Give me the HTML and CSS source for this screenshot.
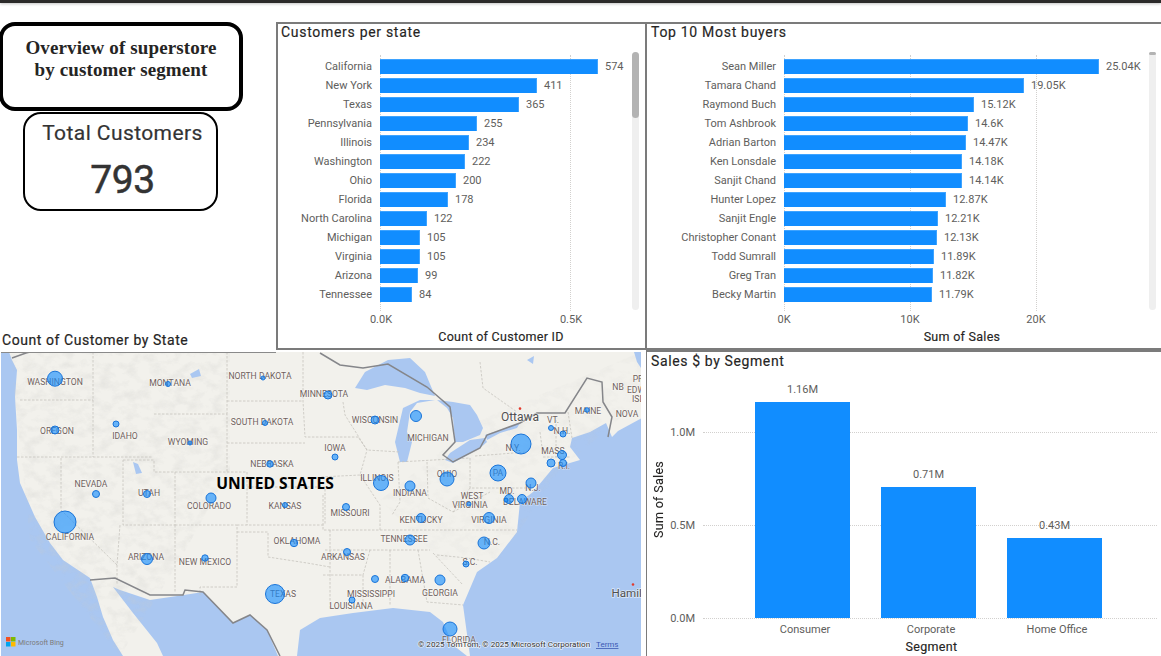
FILE: index.html
```html
<!DOCTYPE html>
<html lang="en">
<head>
<meta charset="utf-8">
<title>Overview of superstore by customer segment</title>
<link rel="stylesheet" href="styles.css">
</head>
<body>
<div class="board">
  <div class="topbar"></div>
  <div class="side">
    <h1 class="headline">Overview of superstore<br>by customer segment</h1>
    <div class="kpi">
      <div class="kpi-label">Total Customers</div>
      <div class="kpi-value">793</div>
    </div>
    <h2 class="map-title">Count of Customer by State</h2>
  </div>

  <section class="panel hchart states">
    <h2 class="title">Customers per state</h2>
    <div class="plot">
      <div class="grid"><i></i><i></i></div>
      <div class="row"><span class="lab">California</span><b style="width:218px"></b><span class="val">574</span></div>
      <div class="row"><span class="lab">New York</span><b style="width:157px"></b><span class="val">411</span></div>
      <div class="row"><span class="lab">Texas</span><b style="width:139px"></b><span class="val">365</span></div>
      <div class="row"><span class="lab">Pennsylvania</span><b style="width:97px"></b><span class="val">255</span></div>
      <div class="row"><span class="lab">Illinois</span><b style="width:89px"></b><span class="val">234</span></div>
      <div class="row"><span class="lab">Washington</span><b style="width:85px"></b><span class="val">222</span></div>
      <div class="row"><span class="lab">Ohio</span><b style="width:76px"></b><span class="val">200</span></div>
      <div class="row"><span class="lab">Florida</span><b style="width:68px"></b><span class="val">178</span></div>
      <div class="row"><span class="lab">North Carolina</span><b style="width:47px"></b><span class="val">122</span></div>
      <div class="row"><span class="lab">Michigan</span><b style="width:40px"></b><span class="val">105</span></div>
      <div class="row"><span class="lab">Virginia</span><b style="width:40px"></b><span class="val">105</span></div>
      <div class="row"><span class="lab">Arizona</span><b style="width:38px"></b><span class="val">99</span></div>
      <div class="row"><span class="lab">Tennessee</span><b style="width:32px"></b><span class="val">84</span></div>
    </div>
    <div class="ticks"><span>0.0K</span><span>0.5K</span></div>
    <div class="axis-title">Count of Customer ID</div>
    <div class="scroll"><div class="thumb"></div></div>
  </section>

  <section class="panel hchart buyers">
    <h2 class="title">Top 10 Most buyers</h2>
    <div class="plot">
      <div class="grid"><i></i><i></i><i></i></div>
      <div class="row"><span class="lab">Sean Miller</span><b style="width:315px"></b><span class="val">25.04K</span></div>
      <div class="row"><span class="lab">Tamara Chand</span><b style="width:240px"></b><span class="val">19.05K</span></div>
      <div class="row"><span class="lab">Raymond Buch</span><b style="width:190px"></b><span class="val">15.12K</span></div>
      <div class="row"><span class="lab">Tom Ashbrook</span><b style="width:184px"></b><span class="val">14.6K</span></div>
      <div class="row"><span class="lab">Adrian Barton</span><b style="width:182px"></b><span class="val">14.47K</span></div>
      <div class="row"><span class="lab">Ken Lonsdale</span><b style="width:178px"></b><span class="val">14.18K</span></div>
      <div class="row"><span class="lab">Sanjit Chand</span><b style="width:178px"></b><span class="val">14.14K</span></div>
      <div class="row"><span class="lab">Hunter Lopez</span><b style="width:162px"></b><span class="val">12.87K</span></div>
      <div class="row"><span class="lab">Sanjit Engle</span><b style="width:154px"></b><span class="val">12.21K</span></div>
      <div class="row"><span class="lab">Christopher Conant</span><b style="width:153px"></b><span class="val">12.13K</span></div>
      <div class="row"><span class="lab">Todd Sumrall</span><b style="width:150px"></b><span class="val">11.89K</span></div>
      <div class="row"><span class="lab">Greg Tran</span><b style="width:149px"></b><span class="val">11.82K</span></div>
      <div class="row"><span class="lab">Becky Martin</span><b style="width:148px"></b><span class="val">11.79K</span></div>
    </div>
    <div class="ticks"><span>0K</span><span>10K</span><span>20K</span></div>
    <div class="axis-title">Sum of Sales</div>
    <div class="scroll"><div class="thumb"></div></div>
  </section>

  <div class="map">
    <svg class="map-svg" viewBox="1 352 640 304" width="640" height="304" role="img" aria-label="Bubble map of customers by US state">
      <defs>
        <filter id="relief" x="0" y="0" width="100%" height="100%">
          <feTurbulence type="fractalNoise" baseFrequency="0.08 0.11" numOctaves="4" seed="7"/>
          <feColorMatrix type="matrix" values="0 0 0 0 .6  0 0 0 0 .6  0 0 0 0 .58  1.6 0 0 0 -.68"/>
        </filter>
        <clipPath id="west"><polygon points="10,352 230,352 230,470 180,560 120,656 30,540 15,400"/></clipPath>
        <clipPath id="east"><polygon points="380,500 480,420 641,352 641,400 560,470 500,560 440,560"/></clipPath>
      </defs>
      <rect class="sea" x="0" y="350" width="642" height="308"/>
      <path class="land" d="M9,352 L12,360 L17,370 L15,397 L17,430 L17,460 L20,483 L35,517 L50,543 L63,560 L90,578 L97,597 L103,617 L113,640 L123,656 L163,656 L157,643 L133,613 L113,587 L120,590 L150,600 L184,595 L203,592 L233,623 L250,615 L267,630 L278,656 L297,656 L300,630 L320,618 L353,613 L393,608 L430,612 L443,622 L453,645 L467,656 L470,656 L463,605 L477,572 L497,558 L517,532 L520,502 L533,492 L553,468 L580,460 L570,447 L572,438 L590,432 L606,423 L612,437 L618,431 L642,418 L642,352 Z"/>
      <rect class="relief" x="0" y="350" width="642" height="308" filter="url(#relief)" clip-path="url(#west)"/>
      <rect class="relief light" x="0" y="350" width="642" height="308" filter="url(#relief)" clip-path="url(#east)"/>
      <g class="water">
        <polygon points="355,388 365,372 388,360 410,358 425,372 435,396 420,393 405,388 385,385 367,390"/>
        <polygon points="400,462 395,442 403,408 420,400 435,400 417,403 410,412 407,432 412,442 407,462"/>
        <polygon points="437,400 453,402 470,405 477,415 483,428 480,435 463,442 455,442 453,418 447,408"/>
        <polygon points="445,460 453,463 480,448 487,442 485,438 470,440 450,453"/>
        <polygon points="485,435 500,430 520,423 517,428 500,433 487,440"/>
        <polygon points="133,462 138,464 142,473 136,474"/>
        <polygon points="190,374 199,369 201,376 192,378"/>
        <polygon points="527,360 534,356 533,364"/>
        <polygon points="634,352 641,352 641,368 637,362"/>
      </g>
      <g class="states-lines">
        <polyline points="17,457 153,457"/><polyline points="20,400 93,400"/><polyline points="93,352 93,457"/>
        <polyline points="61,458 61,510 117,565 120,525"/><polyline points="123,460 154,460 154,472 175,472 175,525 123,525 123,460"/>
        <polyline points="117,565 117,585"/><polyline points="175,525 175,593"/><polyline points="175,525 237,525 237,587 200,587 200,595"/>
        <polyline points="175,472 247,472 247,525"/><polyline points="154,414 227,414 227,472"/><polyline points="227,352 227,414"/>
        <polyline points="227,401 303,401"/><polyline points="227,443 305,443"/><polyline points="247,487 325,487 325,525"/><polyline points="237,525 325,525"/>
        <polyline points="237,532 268,532 268,557 307,563 330,567"/><polyline points="303,352 303,401 305,437 320,437 358,437 367,450 360,475 320,477"/>
        <polyline points="323,495 323,530 380,530 380,505 360,475"/><polyline points="343,402 345,415 367,450 400,452"/>
        <polyline points="398,462 400,502 392,515"/><polyline points="398,462 470,458"/><polyline points="427,462 428,498"/><polyline points="470,458 470,488 527,488"/>
        <polyline points="380,530 517,530"/><polyline points="325,550 430,550"/><polyline points="390,550 390,605"/><polyline points="418,550 427,602 463,605"/>
        <polyline points="323,575 363,575 363,605"/><polyline points="370,550 363,575"/><polyline points="330,530 330,610"/><polyline points="437,555 467,558 490,562"/>
        <polyline points="433,553 463,585"/><polyline points="453,512 490,492"/><polyline points="428,498 453,512 470,488"/>
        <polyline points="475,456 527,452"/><polyline points="540,432 543,455"/><polyline points="543,457 570,457"/><polyline points="568,412 572,438"/>
        <polyline points="480,362 483,388 517,412"/><polyline points="556,420 556,457"/>
      </g>
      <g class="border">
        <polyline points="12,358 26,353 30,352"/>
        <polyline points="320,353 340,365 363,368 388,364 427,387 450,407 455,442 443,455 453,462 480,448 487,435 520,423 537,413 565,413 587,378 602,382 603,402 612,417 608,437"/>
        <polyline points="90,580 115,578 150,595 183,595 185,590 203,592 233,623 250,615 267,630 280,656"/>
      </g>
      <line class="edge" x1="0" y1="352.5" x2="276" y2="352.5"/>
      <g class="place">
        <text x="55" y="385">WASHINGTON</text><text x="170" y="386">MONTANA</text><text x="260" y="379">NORTH DAKOTA</text>
        <text x="324" y="397">MINNESOTA</text><text x="57" y="434">OREGON</text><text x="125" y="439">IDAHO</text>
        <text x="262" y="425">SOUTH DAKOTA</text><text x="188" y="445">WYOMING</text><text x="335" y="451">IOWA</text>
        <text x="272" y="467">NEBRASKA</text><text x="91" y="487">NEVADA</text><text x="149" y="496">UTAH</text>
        <text x="209" y="509">COLORADO</text><text x="285" y="509">KANSAS</text><text x="70" y="540">CALIFORNIA</text>
        <text x="297" y="544">OKLAHOMA</text><text x="146" y="560">ARIZONA</text><text x="205" y="565">NEW MEXICO</text>
        <text x="283" y="597">TEXAS</text><text x="343" y="560">ARKANSAS</text><text x="377" y="481">ILLINOIS</text>
        <text x="410" y="496">INDIANA</text><text x="447" y="477">OHIO</text><text x="350" y="516">MISSOURI</text>
        <text x="421" y="523">KENTUCKY</text><text x="404" y="542">TENNESSEE</text><text x="472" y="499">WEST</text>
        <text x="470" y="508">VIRGINIA</text><text x="489" y="523">VIRGINIA</text><text x="507" y="494">MD.</text>
        <text x="525" y="505">DELAWARE</text><text x="533" y="491">N.J.</text><text x="492" y="545">N.C.</text>
        <text x="470" y="565">S.C.</text><text x="405" y="583">ALABAMA</text><text x="371" y="597">MISSISSIPPI</text>
        <text x="440" y="596">GEORGIA</text><text x="351" y="609">LOUISIANA</text><text x="459" y="643">FLORIDA</text>
        <text x="375" y="423">WISCONSIN</text><text x="428" y="441">MICHIGAN</text><text x="513" y="451">N.Y.</text>
        <text x="498" y="476">PA</text><text x="588" y="414">MAINE</text><text x="553" y="423">VT.</text>
        <text x="562" y="434">N.H.</text><text x="554" y="454">MASS.</text><text x="564" y="469">R.I.</text>
        <text x="618" y="390">NB</text><text x="638" y="382">PR</text><text x="636" y="393">EDW</text><text x="638" y="402">ISL</text>
        <text x="627" y="417">NOVA</text>
      </g>
      <circle class="city" cx="520" cy="408.6" r="1.3"/><circle class="city" cx="633" cy="584.5" r="1.3"/>
      <text class="town" x="520" y="421">Ottawa</text><text class="town start" x="611.5" y="597">Hamilton</text>
      <text class="country" x="275" y="489">UNITED STATES</text>
      <g class="bubbles">
        <circle cx="55" cy="378.7" r="7.5"/><circle cx="168" cy="384" r="2.5"/><circle cx="263" cy="378" r="2"/><circle cx="328" cy="395" r="4"/>
        <circle cx="55" cy="430" r="4"/><circle cx="116" cy="424" r="3"/><circle cx="265" cy="423" r="2.5"/><circle cx="190" cy="443" r="2"/>
        <circle cx="270" cy="464" r="3.2"/><circle cx="96" cy="494" r="3.5"/><circle cx="147" cy="494" r="3.5"/><circle cx="211" cy="498" r="5"/>
        <circle cx="285" cy="505" r="2.5"/><circle cx="65" cy="522" r="11"/><circle cx="294" cy="543" r="3.7"/><circle cx="147" cy="559" r="5.5"/>
        <circle cx="205" cy="558" r="3.2"/><circle cx="275" cy="594" r="9.5"/><circle cx="375" cy="420" r="4"/><circle cx="416" cy="416" r="5.5"/>
        <circle cx="335" cy="457" r="3"/><circle cx="381" cy="483" r="7.5"/><circle cx="410" cy="486" r="5"/><circle cx="447" cy="479" r="7"/>
        <circle cx="498" cy="473" r="8"/><circle cx="521" cy="444" r="10"/><circle cx="346" cy="507" r="3.5"/><circle cx="421" cy="518" r="4.5"/>
        <circle cx="469" cy="504" r="2"/><circle cx="489" cy="518" r="5.5"/><circle cx="410" cy="540" r="5"/><circle cx="484" cy="543" r="6"/>
        <circle cx="347" cy="552" r="3.5"/><circle cx="466" cy="564" r="3"/><circle cx="375" cy="579" r="3.5"/><circle cx="405" cy="578" r="3.7"/>
        <circle cx="440" cy="580" r="5"/><circle cx="352" cy="600" r="3"/><circle cx="450" cy="629" r="7"/><circle cx="509" cy="499" r="4.5"/>
        <circle cx="506" cy="500" r="2"/><circle cx="522" cy="499" r="4.5"/><circle cx="531" cy="483" r="5"/><circle cx="551" cy="428" r="2.5"/>
        <circle cx="563" cy="434" r="3"/><circle cx="587" cy="410" r="2.3"/><circle cx="562" cy="455" r="4.5"/><circle cx="551" cy="463" r="4"/>
        <circle cx="563" cy="463" r="3.5"/>
      </g>
      <g>
        <rect class="ms-r" x="6" y="637" width="4.5" height="4.5"/><rect class="ms-g" x="11" y="637" width="4.5" height="4.5"/>
        <rect class="ms-b" x="6" y="642" width="4.5" height="4.5"/><rect class="ms-y" x="11" y="642" width="4.5" height="4.5"/>
        <text class="bing" x="18" y="644.5">Microsoft Bing</text>
      </g>
      <text class="copy" x="418" y="647">© 2025 TomTom, © 2025 Microsoft Corporation</text>
      <text class="terms" x="596" y="647">Terms</text>
    </svg>
  </div>

  <section class="panel segments">
    <h2 class="title">Sales $ by Segment</h2>
    <div class="vwrap">
      <div class="ytitle">Sum of Sales</div>
      <div class="vcol">
        <div class="vplot">
          <div class="hgrid" style="bottom:185px"><span>1.0M</span></div>
          <div class="hgrid" style="bottom:92px"><span>0.5M</span></div>
          <div class="hgrid" style="bottom:-1px"><span>0.0M</span></div>
          <div class="vbar"><span class="vval">1.16M</span><b style="height:216px"></b></div>
          <div class="vbar"><span class="vval">0.71M</span><b style="height:131px"></b></div>
          <div class="vbar"><span class="vval">0.43M</span><b style="height:80px"></b></div>
        </div>
        <div class="cats"><span>Consumer</span><span>Corporate</span><span>Home Office</span></div>
        <div class="seg-title">Segment</div>
      </div>
    </div>
  </section>
</div>
</body>
</html>
```
FILE: styles.css
```css
* { box-sizing: border-box; }
html, body { margin: 0; padding: 0; background: #fff; }
body { width: 1161px; height: 656px; overflow: hidden; font-family: "Roboto", "Liberation Sans", sans-serif; }

.board {
  display: grid;
  grid-template-columns: 276px 370px 515px;
  grid-template-rows: 22px 328px 306px;
  width: 1161px;
  height: 656px;
}
.topbar {
  grid-column: 1 / -1;
  height: 3px;
  background: #2b2a29;
  box-shadow: 0 1px 3px rgba(0,0,0,.25);
}

/* left column */
.side { grid-column: 1; grid-row: 2; display: flex; flex-direction: column; align-items: flex-start; }
.headline {
  width: 244px;
  height: 89px;
  margin: 0 0 1px -1px;
  padding-top: 11px;
  border: 4px solid #000;
  border-radius: 16px;
  font: bold 19px/22px "Liberation Serif", serif;
  letter-spacing: .12px;
  color: #252423;
  text-align: center;
}
.kpi {
  width: 195px;
  height: 99px;
  margin-left: 23px;
  padding-left: 4px;
  border: 2px solid #000;
  border-radius: 18px;
  text-align: center;
  color: #333;
}
.kpi-label { font-size: 21px; line-height: 26px; margin-top: 6px; letter-spacing: .42px; -webkit-text-stroke: .2px #333; }
.kpi-value { font-size: 39px; line-height: 46px; margin-top: 11px; font-weight: 400; letter-spacing: -.4px; -webkit-text-stroke: .5px #333; }
.map-title { margin: auto 0 1px 2px; font-size: 14px; line-height: 18px; font-weight: 400; letter-spacing: .56px; color: #252423; -webkit-text-stroke: .2px #252423; }

/* panels */
.panel { position: relative; border: 2px solid #7b7b7b; overflow: hidden; background: #fff; }
.title { margin: 0; padding-left: 3px; font-size: 14px; line-height: 16px; font-weight: 400; letter-spacing: .7px; color: #252423; -webkit-text-stroke: .15px #252423; }

.hchart { grid-row: 2; --label: 94px; --gap: 8px; --tick: 190px; --pw: 242px; --nudge: 1px; }
.states { grid-column: 2; border-right-width: 1px; }
.buyers { grid-column: 3; border-left-width: 1px; border-right: 0; --label: 129px; --tick: 126px; --pw: 356px; --nudge: 0px; }
.buyers .title { padding-left: 4px; }

.plot { position: relative; margin-top: 17px; }
.row { display: flex; align-items: center; height: 19px; position: relative; }
.lab { width: var(--label); margin-right: var(--gap); text-align: right; font-size: 11px; color: #605e5c; white-space: nowrap; }
.row b { display: block; height: 15px; background: #118dff; border-top: 1px solid #3ea3ff; border-right: 1px solid #3ea3ff; }
.val { margin-left: 7px; font-size: 11px; color: #605e5c; white-space: nowrap; }

.grid { position: absolute; top: -2px; bottom: -7px; left: calc(var(--label) + var(--gap)); display: flex; }
.grid i { flex: none; width: var(--tick); border-left: 1px dotted #d2d0ce; }

.ticks { display: flex; margin: 7px 0 0 calc(var(--label) + var(--gap) - var(--tick) / 2 + var(--nudge)); height: 18px; }
.ticks span { flex: none; width: var(--tick); text-align: center; font-size: 11px; line-height: 18px; color: #605e5c; }
.axis-title { margin-left: calc(var(--label) + var(--gap)); width: var(--pw); text-align: center; font-size: 12.5px; line-height: 16px; letter-spacing: .28px; color: #252423; -webkit-text-stroke: .15px #252423; }

.scroll { position: absolute; top: 28px; bottom: 38px; right: 5px; width: 7px; border-radius: 4px; background: #efefef; }
.states .scroll { right: 6px; }
.thumb { height: 66px; border-radius: 4px; background: #b3b3b3; }
.buyers .thumb { height: 3px; }

/* map */
.map { grid-column: 1 / 3; grid-row: 3; margin: 2px 0 0 1px; width: 640px; height: 304px; overflow: hidden; }
.map-svg { display: block; }
.sea { fill: #aac7f1; }
.land { fill: #f2f1ec; }
.relief { opacity: .4; }
.relief.light { opacity: .2; }
.water polygon { fill: #aac7f1; }
.states-lines polyline { fill: none; stroke: #c6c4be; stroke-width: .8; stroke-dasharray: 2.5 1.5; }
.border polyline { fill: none; stroke: #85868a; stroke-width: 1.5; }
.edge { stroke: #8a8a8a; stroke-width: 1; }
.place text { font-family: "Roboto", sans-serif; font-size: 8.6px; fill: #6f5f5c; text-anchor: middle; paint-order: stroke; stroke: rgba(255,255,255,.45); stroke-width: 1.2px; }
.town { font-family: "Roboto", sans-serif; font-size: 12px; fill: #4f4f4f; text-anchor: middle; paint-order: stroke; stroke: rgba(255,255,255,.6); stroke-width: 1.5px; }
.town.start { text-anchor: start; font-size: 11.6px; }
.city { fill: #e2392c; }
.country { font-family: "Open Sans", sans-serif; font-weight: 700; font-size: 15.6px; fill: #000; text-anchor: middle; }
.bubbles circle { fill: rgba(17,141,255,.62); stroke: #1a74d8; stroke-width: 1; }
.ms-r { fill: #f25022; } .ms-g { fill: #7fba00; } .ms-b { fill: #00a4ef; } .ms-y { fill: #ffb900; }
.bing { font-family: "Roboto", sans-serif; font-size: 7px; fill: #7a7a7a; }
.copy { font-family: "Roboto", sans-serif; font-size: 8.1px; fill: #333; paint-order: stroke; stroke: rgba(255,255,255,.7); stroke-width: 1.5px; }
.terms { font-family: "Roboto", sans-serif; font-size: 8px; fill: #3d5bb5; text-decoration: underline; }

/* column chart */
.segments { grid-column: 3; grid-row: 3; border-width: 2px 0 0 1px; }
.vwrap { display: flex; padding-left: 5px; margin-top: 8px; }
.segments .title { line-height: 18px; padding-left: 4px; letter-spacing: .62px; }
.ytitle { width: 14px; height: 243px; writing-mode: vertical-rl; transform: rotate(180deg); text-align: center; font-size: 12.5px; line-height: 14px; letter-spacing: .32px; color: #252423; -webkit-text-stroke: .1px #252423; }
.vcol { margin-left: 37px; width: 454px; }
.vplot { position: relative; height: 240px; display: flex; align-items: flex-end; gap: 31px; padding-left: 52px; }
.hgrid { position: absolute; left: 0; right: 0; border-top: 1px dotted #d2d0ce; }
.hgrid span { position: absolute; right: calc(100% + 8px); top: -9px; font-size: 11px; line-height: 18px; color: #605e5c; }
.vbar { position: relative; width: 95px; display: flex; flex-direction: column; align-items: center; }
.vbar b { display: block; width: 100%; background: #118dff; }
.vval { font-size: 11px; line-height: 18px; color: #605e5c; margin-bottom: 3px; }
.cats { display: flex; gap: 31px; padding-left: 54.5px; height: 22px; padding-top: 1px; }
.cats span { width: 95px; text-align: center; font-size: 11px; line-height: 22px; color: #605e5c; white-space: nowrap; }
.seg-title { width: 456px; padding-left: 1px; text-align: center; font-size: 12.5px; line-height: 14px; letter-spacing: .35px; color: #252423; -webkit-text-stroke: .15px #252423; }
```
